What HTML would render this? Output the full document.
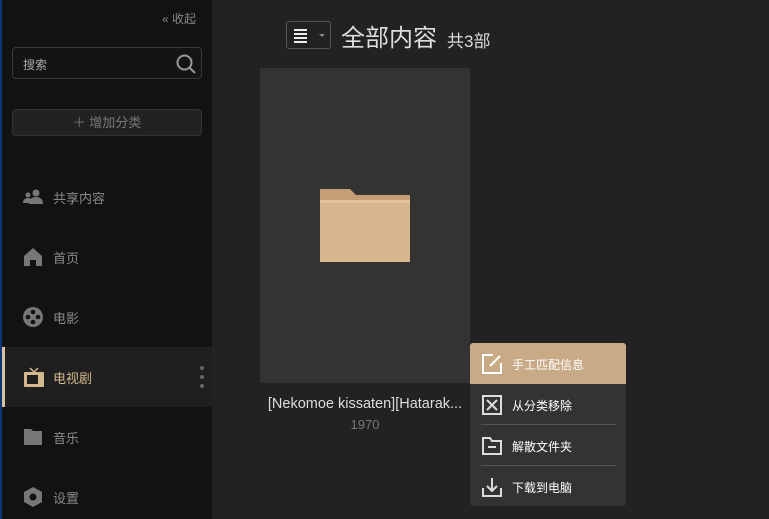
<!DOCTYPE html><html><head><meta charset="utf-8"><style>
*{margin:0;padding:0;box-sizing:border-box}
html,body{width:769px;height:519px;overflow:hidden}
body{background:#222;font-family:"Liberation Sans","Noto Sans CJK SC",sans-serif;position:relative;color:#888}
.sb{position:absolute;left:0;top:0;width:212px;height:519px;background:#121212;border-left:2px solid #0b3579}
.abs{position:absolute}
.item{position:absolute;left:0;width:210px;height:60px;font-size:13px;color:#8a8a8a}
.item span{position:absolute;left:51px;top:21px}
.item svg{position:absolute;left:20px;top:19px}
.menu{position:absolute;left:470px;top:343px;width:156px;height:163px;background:#333;border-radius:3px;overflow:hidden}
.mi{position:absolute;left:0;width:156px;height:41px;color:#fff;font-size:12px}
.mi span{position:absolute;left:42px;top:13px}
.mi svg{position:absolute;left:11px;top:10px}
.sep{position:absolute;left:11px;width:135px;height:1px;background:#555}
</style></head><body>
<div class="sb">
<div class="abs" style="left:160px;top:10px;font-size:12px;color:#888">«&nbsp;收起</div>
<div class="abs" style="left:10px;top:47px;width:190px;height:32px;border:1px solid #3a3a3a;border-radius:4px;background:#141414"></div>
<div class="abs" style="left:21px;top:56px;font-size:12px;color:#aaa">搜索</div>
<svg class="abs" style="left:173px;top:53px" width="22" height="22"><circle cx="9.5" cy="9.5" r="7" fill="none" stroke="#999" stroke-width="2"/><path d="M15 15l5 5" stroke="#999" stroke-width="2"/></svg>
<div class="abs" style="left:10px;top:109px;width:190px;height:27px;border:1px solid #333;border-radius:4px;background:#222;color:#777;font-size:13px;text-align:center;line-height:25px">＋ 增加分类</div>
<div class="item" style="top:167px"><svg width="22" height="22"><circle cx="6" cy="9" r="2.5" fill="#777"/><circle cx="14" cy="7" r="3.5" fill="#777"/><path d="M1 17q0-5 5-5 3 0 4 2v3zM7 18q0-7 7-7t7 7z" fill="#777"/></svg><span>共享内容</span></div>
<div class="item" style="top:227px"><svg width="22" height="22"><path d="M2 10L11 2l9 8v10h-6v-6h-6v6H2z" fill="#777"/></svg><span>首页</span></div>
<div class="item" style="top:287px"><svg width="22" height="22"><circle cx="11" cy="11" r="10" fill="#777"/><circle cx="11" cy="6" r="2.3" fill="#121212"/><circle cx="11" cy="16" r="2.3" fill="#121212"/><circle cx="6" cy="11" r="2.3" fill="#121212"/><circle cx="16" cy="11" r="2.3" fill="#121212"/></svg><span>电影</span></div>
<div class="item" style="top:347px;background:#1f1f1f;border-left:3px solid #d9c2a0;left:0"><svg width="22" height="22" style="left:18px"><path d="M7 2l4 4 4-4" stroke="#d4b88e" stroke-width="1.5" fill="none"/><rect x="1" y="6" width="20" height="15" rx="1" fill="#d4b88e"/><rect x="4" y="9" width="11" height="9" fill="#1f1f1f"/></svg><span style="color:#d4b88e;left:48px">电视剧</span>
<div class="abs" style="left:195px;top:19px;width:4px"><div style="width:4px;height:4px;border-radius:2px;background:#666;margin-bottom:5px"></div><div style="width:4px;height:4px;border-radius:2px;background:#666;margin-bottom:5px"></div><div style="width:4px;height:4px;border-radius:2px;background:#666"></div></div></div>
<div class="item" style="top:407px"><svg width="22" height="22"><path d="M2 3h7l2 2h9v14H2z" fill="#777"/></svg><span>音乐</span></div>
<div class="item" style="top:467px"><svg width="22" height="22"><path d="M11 1l9 5v10l-9 5-9-5V6z" fill="#777"/><circle cx="11" cy="11" r="3.5" fill="#121212"/></svg><span>设置</span></div>
</div>
<div class="abs" style="left:286px;top:21px;width:45px;height:28px;border:1px solid #555;border-radius:3px"></div>
<div class="abs" style="left:294px;top:29px;width:13px"><div style="height:2px;background:#eee;margin-bottom:2px"></div><div style="height:2px;background:#eee;margin-bottom:2px"></div><div style="height:2px;background:#eee;margin-bottom:2px"></div><div style="height:2px;background:#eee"></div></div>
<div class="abs" style="left:319px;top:34px;border:3px solid transparent;border-top:3px solid #888"></div>
<div class="abs" style="left:341px;top:18px;font-size:24px;color:#ddd">全部内容</div>
<div class="abs" style="left:447px;top:27px;font-size:17px;color:#ddd">共3部</div>
<div class="abs" style="left:260px;top:68px;width:210px;height:315px;background:#333"></div>
<svg class="abs" style="left:318px;top:187px" width="94" height="78"><path d="M2 2h30l6 6h54v6H2z" fill="#c49f74"/><rect x="2" y="13" width="90" height="62" fill="#d8b78f"/><rect x="2" y="13" width="90" height="3" fill="#e2c39c"/></svg>
<div class="abs" style="left:255px;top:396px;width:220px;text-align:center;font-size:14.5px;color:#ddd;white-space:nowrap">[Nekomoe kissaten][Hatarak...</div>
<div class="abs" style="left:260px;top:417px;width:210px;text-align:center;font-size:13px;color:#777">1970</div>
<div class="menu">
<div class="mi" style="top:0;background:#c8ab86"><svg width="22" height="22"><path d="M12 2H2v18h18V10" stroke="#fff" stroke-width="2" fill="none"/><path d="M9 13L19 3" stroke="#fff" stroke-width="2"/></svg><span>手工匹配信息</span></div>
<div class="mi" style="top:41px"><svg width="22" height="22"><rect x="2" y="2" width="18" height="18" stroke="#ddd" stroke-width="2" fill="none"/><path d="M6 6l10 10M16 6L6 16" stroke="#ddd" stroke-width="2"/></svg><span>从分类移除</span></div>
<div class="sep" style="top:81px"></div>
<div class="mi" style="top:82px"><svg width="22" height="22"><path d="M2 3h7l2 3h9v13H2z" stroke="#ddd" stroke-width="2" fill="none"/><path d="M7 12h8" stroke="#ddd" stroke-width="2"/></svg><span>解散文件夹</span></div>
<div class="sep" style="top:122px"></div>
<div class="mi" style="top:123px"><svg width="22" height="22"><path d="M2 12v8h18v-8M11 2v13M6 10l5 5 5-5" stroke="#ddd" stroke-width="2" fill="none"/></svg><span>下载到电脑</span></div>
</div>
</body></html>
